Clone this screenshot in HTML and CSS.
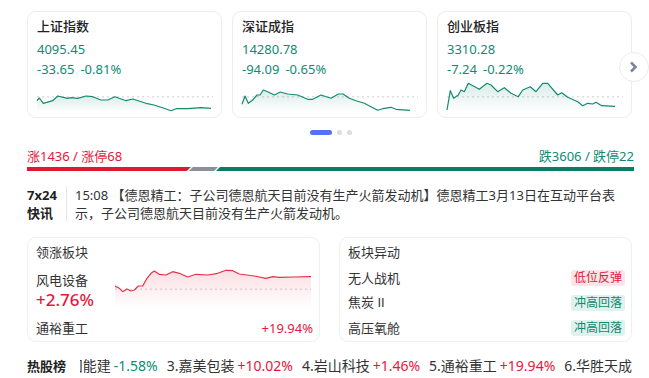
FILE: index.html
```html
<!DOCTYPE html>
<html lang="zh-CN">
  <head>
    <meta charset="UTF-8" />
    <meta name="viewport" content="width=device-width, initial-scale=1.0" />
    <title>行情首页</title>
    <link rel="stylesheet" href="styles.css">
  </head>
  <body>
    <svg class="defs" width="0" height="0" aria-hidden="true">
      <defs>
        <linearGradient id="fallFill" x1="0" y1="0" x2="0" y2="1">
          <stop offset="0" stop-color="#168a6e" stop-opacity="0.16" />
          <stop offset="1" stop-color="#168a6e" stop-opacity="0" />
        </linearGradient>
        <linearGradient id="riseFill" x1="0" y1="0" x2="0" y2="1">
          <stop offset="0" stop-color="#e23148" stop-opacity="0.16" />
          <stop offset="1" stop-color="#e23148" stop-opacity="0" />
        </linearGradient>
      </defs>
    </svg>

    <main class="page">
      <!-- index cards -->
      <section class="indexes">
        <div class="indexes_track">
          <div class="index_card">
            <p class="index_card_name">上证指数</p>
            <p class="index_card_value">4095.45</p>
            <p class="index_card_change"><span>-33.65</span><span>-0.81%</span></p>
            <svg class="index_card_chart" viewBox="0 0 176 30" preserveAspectRatio="none">
              <line class="base_line" x1="0" y1="14.7" x2="176" y2="14.7" />
              <polygon fill="url(#fallFill)" points="0,30 0,18.7 2.3,16 6.3,21.3 15.7,18.7 20.7,14 30.7,16.3 34,15.7 40.7,16.3 49,14 55.7,14.7 64,18 70.7,18 78,14.7 89,18.7 95.7,17 109,21.3 117,23 127,26.3 134,28.7 139,26.7 150.7,26.7 164,25.7 174,26.3 174,30" />
              <polyline class="fall_line" points="0,18.7 2.3,16 6.3,21.3 15.7,18.7 20.7,14 30.7,16.3 34,15.7 40.7,16.3 49,14 55.7,14.7 64,18 70.7,18 78,14.7 89,18.7 95.7,17 109,21.3 117,23 127,26.3 134,28.7 139,26.7 150.7,26.7 164,25.7 174,26.3" />
            </svg>
          </div>
          <div class="index_card">
            <p class="index_card_name">深证成指</p>
            <p class="index_card_value">14280.78</p>
            <p class="index_card_change"><span>-94.09</span><span>-0.65%</span></p>
            <svg class="index_card_chart" viewBox="0 0 176 30" preserveAspectRatio="none">
              <line class="base_line" x1="0" y1="14.7" x2="176" y2="14.7" />
              <polygon fill="url(#fallFill)" points="0,30 0,22.3 3,14 6.3,21.3 10.7,18 15,13 18,13 21.3,8 25.7,9.7 32.3,13 38.3,10 45.7,12 55.7,13 65.7,17.3 70.7,17.3 79,13 89,16.3 96.3,12 101,12 107.3,16.3 114,18.7 122.3,21.3 129,24.7 135.7,28.3 140.7,26.7 149,25.3 154,27.3 168,28.3 168,30" />
              <polyline class="fall_line" points="0,22.3 3,14 6.3,21.3 10.7,18 15,13 18,13 21.3,8 25.7,9.7 32.3,13 38.3,10 45.7,12 55.7,13 65.7,17.3 70.7,17.3 79,13 89,16.3 96.3,12 101,12 107.3,16.3 114,18.7 122.3,21.3 129,24.7 135.7,28.3 140.7,26.7 149,25.3 154,27.3 168,28.3" />
            </svg>
          </div>
          <div class="index_card">
            <p class="index_card_name">创业板指</p>
            <p class="index_card_value">3310.28</p>
            <p class="index_card_change"><span>-7.24</span><span>-0.22%</span></p>
            <svg class="index_card_chart" viewBox="0 0 176 30" preserveAspectRatio="none">
              <line class="base_line" x1="0" y1="14.7" x2="176" y2="14.7" />
              <polygon fill="url(#fallFill)" points="0,30 0,28 3.3,8.7 6.7,16.3 11.3,13 14,8 17.3,9.7 21.3,1.3 32.3,7.3 40,1.3 44,3 50.7,9.7 57.3,5.7 64,11.3 71.3,14.7 75.7,8 83.3,4.7 89,9.7 95.7,1.3 100.7,1.3 110.7,13 114.7,10.7 120.7,15.3 130.7,19.7 135.7,23.7 140.7,21.3 145.7,22 149,20.3 154.7,23.7 168,24.3 168,30" />
              <polyline class="fall_line" points="0,28 3.3,8.7 6.7,16.3 11.3,13 14,8 17.3,9.7 21.3,1.3 32.3,7.3 40,1.3 44,3 50.7,9.7 57.3,5.7 64,11.3 71.3,14.7 75.7,8 83.3,4.7 89,9.7 95.7,1.3 100.7,1.3 110.7,13 114.7,10.7 120.7,15.3 130.7,19.7 135.7,23.7 140.7,21.3 145.7,22 149,20.3 154.7,23.7 168,24.3" />
            </svg>
          </div>
        </div>
        <button class="indexes_next" type="button" aria-label="下一页">
          <svg viewBox="0 0 30 30" width="30" height="30">
            <path d="M12 10.5 L16.5 15 L12 19.5" />
          </svg>
        </button>
      </section>

      <div class="pager">
        <span class="pager_active"></span>
        <span class="pager_dot"></span>
        <span class="pager_dot"></span>
      </div>

      <!-- market breadth -->
      <section class="breadth">
        <div class="breadth_text">
          <span class="rise">涨1436 / 涨停68</span>
          <span class="fall">跌3606 / 跌停22</span>
        </div>
        <div class="breadth_bar">
          <span class="bar_rise" style="width: 27%"></span>
          <span class="bar_flat" style="width: 4.8%"></span>
          <span class="bar_fall"></span>
        </div>
      </section>

      <!-- 7x24 news -->
      <section class="flash">
        <div class="flash_label">7x24<br />快讯</div>
        <p class="flash_text">15:08 【德恩精工：子公司德恩航天目前没有生产火箭发动机】德恩精工3月13日在互动平台表示，子公司德恩航天目前没有生产火箭发动机。</p>
      </section>

      <!-- sector panels -->
      <section class="panels">
        <div class="panel">
          <p class="panel_title">领涨板块</p>
          <div class="lead_body">
            <div class="lead_info">
              <p class="lead_name">风电设备</p>
              <p class="lead_pct">+2.76%</p>
            </div>
            <svg class="lead_chart" viewBox="0 0 196 44" preserveAspectRatio="none">
              <line class="base_line" x1="0" y1="25.3" x2="196" y2="25.3" />
              <polygon fill="url(#riseFill)" points="0,44 0,22 4.3,24.3 7.7,27.7 12,25 16,27 19.3,26 23.3,22 27.7,22 32,14.3 36,9.3 39.3,7 44.3,10.3 51,11 57.7,7.7 64.3,9.3 72.7,13 81,10.3 92.7,11 102.7,9.3 111,6.3 117.7,6.7 124.3,10 139.3,12 151,14.3 157.7,12.7 164.3,13.3 179.3,13 196,12.7 196,44" />
              <polyline class="rise_line" points="0,22 4.3,24.3 7.7,27.7 12,25 16,27 19.3,26 23.3,22 27.7,22 32,14.3 36,9.3 39.3,7 44.3,10.3 51,11 57.7,7.7 64.3,9.3 72.7,13 81,10.3 92.7,11 102.7,9.3 111,6.3 117.7,6.7 124.3,10 139.3,12 151,14.3 157.7,12.7 164.3,13.3 179.3,13 196,12.7" />
            </svg>
          </div>
          <div class="lead_stock">
            <span>通裕重工</span>
            <span class="rise">+19.94%</span>
          </div>
        </div>

        <div class="panel">
          <p class="panel_title">板块异动</p>
          <div class="move_row">
            <span>无人战机</span>
            <span class="tag tag_rise">低位反弹</span>
          </div>
          <div class="move_row">
            <span>焦炭 <span class="latin">II</span></span>
            <span class="tag tag_fall">冲高回落</span>
          </div>
          <div class="move_row">
            <span>高压氧舱</span>
            <span class="tag tag_fall">冲高回落</span>
          </div>
        </div>
      </section>

      <!-- hot stocks ticker -->
      <section class="hot">
        <span class="hot_title">热股榜</span>
        <div class="hot_window">
          <div class="hot_track">
            <span class="hot_item">2.中国能建<span class="fall">-1.58%</span></span>
            <span class="hot_item">3.嘉美包装<span class="rise">+10.02%</span></span>
            <span class="hot_item">4.岩山科技<span class="rise">+1.46%</span></span>
            <span class="hot_item">5.通裕重工<span class="rise">+19.94%</span></span>
            <span class="hot_item">6.华胜天成<span class="fall">-2.13%</span></span>
          </div>
        </div>
      </section>
    </main>
  </body>
</html>
```

FILE: styles.css
```css
/* variables */
:root {
  --textColor: #333;
  --riseColor: #e5173b;
  --fallColor: #0f8b73;
  --lineColor: #ededed;
}

/* base */
*,
::before,
::after {
  box-sizing: border-box;
  margin: 0;
  padding: 0;
}
body {
  background-color: #fff;
  color: var(--textColor);
  font-family: "Noto Sans", "Noto Sans CJK SC", sans-serif;
  font-size: 13px;
  line-height: 18px;
}
.defs {
  position: absolute;
}
.rise {
  color: var(--riseColor);
}
.fall {
  color: var(--fallColor);
}
.latin {
  font-family: "Liberation Sans", sans-serif;
}

.page {
  width: 607px;
  margin-left: 27px;
  padding-top: 11px;
}

/* index cards */
.indexes {
  position: relative;
}
.indexes_track {
  display: flex;
  gap: 10px;
}
.index_card {
  width: 195px;
  padding: 4px 9px 5px;
  border: 1px solid var(--lineColor);
  border-radius: 9px;
}
.index_card_name {
  font-size: 13px;
  line-height: 20px;
  font-weight: 500;
  color: #222;
}
.index_card_value {
  margin-top: 3px;
  line-height: 20px;
  color: var(--fallColor);
}
.index_card_change {
  display: flex;
  gap: 6px;
  line-height: 20px;
  color: var(--fallColor);
}
.index_card_chart {
  display: block;
  width: 176px;
  height: 30px;
  margin-top: 3px;
  overflow: visible;
}
.base_line {
  stroke: #dedede;
  stroke-width: 1.5;
  stroke-dasharray: 2 3;
}
.fall_line,
.rise_line {
  fill: none;
  stroke-width: 1.2;
  stroke-linejoin: round;
}
.fall_line {
  stroke: #168a6e;
}
.rise_line {
  stroke: #e23148;
}
.indexes_next {
  position: absolute;
  top: 41px;
  right: -15px;
  width: 30px;
  height: 30px;
  border: 1px solid #ececec;
  border-radius: 50%;
  background-color: #fff;
  cursor: pointer;
}
.indexes_next svg {
  position: absolute;
  top: -1px;
  left: -1px;
}
.indexes_next path {
  fill: none;
  stroke: #7d84a0;
  stroke-width: 2.6;
}

/* pager */
.pager {
  display: flex;
  justify-content: center;
  align-items: center;
  gap: 5px;
  margin-top: 12px;
  padding-left: 1px;
}
.pager_active {
  width: 22px;
  height: 5px;
  border-radius: 3px;
  background-color: #5473f4;
}
.pager_dot {
  width: 5px;
  height: 5px;
  border-radius: 50%;
  background-color: #dcdcdc;
}

/* market breadth */
.breadth {
  margin-top: 12px;
}
.breadth_text {
  display: flex;
  justify-content: space-between;
  line-height: 18px;
}
.breadth_bar {
  display: flex;
  height: 4px;
  margin-top: 2px;
}
.bar_rise {
  background-color: #dc1a2e;
  clip-path: polygon(0 0, 100% 0, calc(100% - 4px) 100%, 0 100%);
}
.bar_flat {
  margin-left: -2px;
  background-color: #8d8e99;
  clip-path: polygon(4px 0, 100% 0, calc(100% - 4px) 100%, 0 100%);
}
.bar_fall {
  flex: 1;
  margin-left: -2px;
  background-color: #0a7e64;
  clip-path: polygon(4px 0, 100% 0, 100% 100%, 0 100%);
}

/* 7x24 news */
.flash {
  display: flex;
  margin-top: 15px;
}
.flash_label {
  width: 39px;
  font-weight: 700;
  color: #222;
}
.flash_text {
  width: 556px;
  padding-left: 8px;
  border-left: 1px solid #e6e6e6;
}

/* sector panels */
.panels {
  display: flex;
  gap: 19px;
  margin-top: 15px;
}
.panel {
  width: 293px;
  padding: 5px 6px 1px 8px;
  border: 1px solid #f0f0f0;
  border-radius: 9px;
}
.panel_title {
  line-height: 18px;
}
.lead_body {
  display: flex;
  height: 48px;
}
.lead_info {
  width: 79px;
  padding-top: 10px;
}
.lead_pct {
  font-size: 17px;
  line-height: 22px;
  font-weight: 500;
  color: var(--riseColor);
}
.lead_chart {
  display: block;
  width: 196px;
  height: 44px;
  margin-top: 3px;
}
.lead_stock {
  display: flex;
  justify-content: space-between;
  margin-top: 10px;
  padding-bottom: 3px;
}
.move_row {
  display: flex;
  justify-content: space-between;
  align-items: center;
  height: 25px;
}
.move_row:first-of-type {
  margin-top: 4px;
}
.tag {
  padding: 0 3px;
  border-radius: 3px;
  font-size: 12px;
  line-height: 16px;
}
.tag_rise {
  background-color: #fde4e8;
  color: #e0193a;
}
.tag_fall {
  background-color: #e0f2ed;
  color: #0d8a70;
}

/* hot stocks ticker */
.hot {
  display: flex;
  align-items: center;
  margin-top: 14px;
  width: 607px;
  font-size: 14px;
  line-height: 20px;
}
.hot_title {
  width: 53px;
  font-size: 13px;
  font-weight: 700;
  color: #222;
}
.hot_window {
  flex: 1;
  overflow: hidden;
}
.hot_track {
  display: flex;
  gap: 9px;
  white-space: nowrap;
  margin-left: -37px;
}
.hot_item span {
  margin-left: 3px;
}
```
